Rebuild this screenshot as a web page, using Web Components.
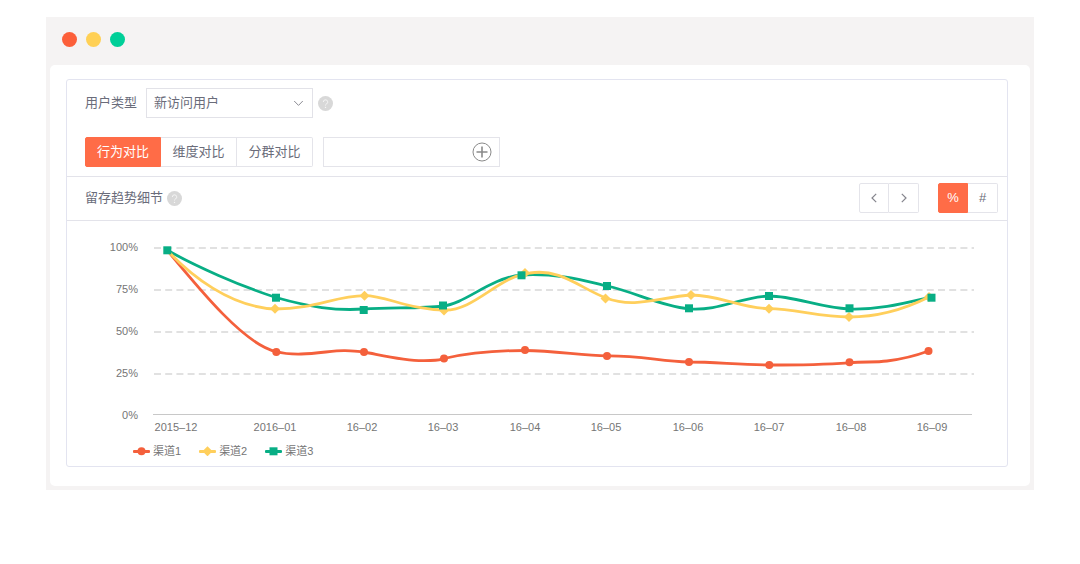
<!DOCTYPE html>
<html lang="zh-CN">
<head>
<meta charset="utf-8">
<title>留存趋势</title>
<style>
  body {
    margin: 0;
    padding: 17px 46px;
    background: #fff;
    color: #6a6c7a;
    font: 13px/20px "Liberation Sans", "Noto Sans CJK SC", sans-serif;
  }
</style>
</head>
<body>
<app-window>
  <retention-panel></retention-panel>
</app-window>

<script>
const define = (name, html, setup) =>
  customElements.define(name, class extends HTMLElement {
    connectedCallback() {
      if (this.shadowRoot) return;
      this.attachShadow({ mode: "open" }).innerHTML = html;
      if (setup) setup(this, this.shadowRoot);
    }
  });

/* Window frame with three coloured dots */
define("app-window", `
  <style>
    :host { display: block; background: #f5f3f3; padding: 0 4px 4px; }
    header { display: flex; gap: 9px; padding: 15px 12px 18px; }
    i { width: 15px; height: 15px; border-radius: 50%; }
    .close { background: #fc5f3a; }
    .min { background: #ffd055; }
    .max { background: #00cf98; }
    main { background: #fff; border-radius: 5px; padding: 14px 22px 19px 16px; }
  </style>
  <header><i class="close"></i><i class="min"></i><i class="max"></i></header>
  <main><slot></slot></main>
`);

/* Round question-mark hint */
define("help-tip", `
  <style>
    :host { display: block; width: 15px; height: 15px; }
    svg { display: block; }
  </style>
  <svg width="15" height="15" viewBox="0 0 15 15" fill="none">
    <circle cx="7.5" cy="7.5" r="7.5" fill="#d8d8d8"/>
    <path d="M5.3 6a2.2 2.2 0 1 1 3.3 1.9c-.8.5-1.1.8-1.1 1.6" stroke="#f6f6f6"/>
    <circle cx="7.5" cy="11.4" r=".7" fill="#f6f6f6"/>
  </svg>
`);

/* Labelled drop-down */
define("field-select", `
  <style>
    :host { display: flex; align-items: center; gap: 9px; }
    .box { display: grid; align-items: center; width: 167px; }
    select, svg { grid-area: 1 / 1; }
    select {
      appearance: none; box-sizing: border-box; width: 100%; height: 30px; margin: 0;
      padding: 0 7px; border: 1px solid #e2e2e8; border-radius: 0;
      background: #fff; color: inherit; font: inherit;
    }
    svg { justify-self: end; margin-right: 9px; pointer-events: none; }
  </style>
  <label for="field"><slot></slot></label>
  <div class="box">
    <select id="field"></select>
    <svg width="11" height="7" viewBox="0 0 11 7" fill="none" stroke="#8c8c94"><path d="M1.2 1 5.5 5.4 9.8 1"/></svg>
  </div>
`, (host, root) => {
  root.querySelector("select").add(new Option(host.getAttribute("value")));
});

/* Row of joined buttons; children are slotted <seg-button> elements */
define("button-group", `
  <style>:host { display: flex; }</style>
  <slot></slot>
`);

define("seg-button", `
  <style>
    :host { display: block; width: 30px; }
    :host([wide]) { width: 76px; }
    button {
      display: flex; align-items: center; justify-content: center;
      box-sizing: border-box; width: 100%; height: 30px; padding: 0;
      border: 1px solid #e4e4ea; border-left-width: 0; background: #fff;
      color: inherit; font: inherit;
    }
    :host(:first-child) button { border-left-width: 1px; border-radius: 2px 0 0 2px; }
    :host(:last-child) button { border-radius: 0 2px 2px 0; }
    :host([active]) button { background: #ff6c47; border-color: #ff6c47; color: #fff; }
  </style>
  <button type="button"><slot></slot></button>
`, (host, root) => {
  const button = root.querySelector("button");
  button.setAttribute("aria-pressed", host.hasAttribute("active"));
  if (host.title) button.setAttribute("aria-label", host.title);
});

/* Text box with a round add button at its end */
define("add-field", `
  <style>
    :host {
      display: flex; align-items: center; box-sizing: border-box;
      width: 177px; height: 30px; padding-right: 7px; border: 1px solid #e4e4ea;
    }
    input { flex: 1; min-width: 0; border: 0; padding: 0 8px; background: none; color: inherit; font: inherit; outline: none; }
    button { border: 0; padding: 0; background: none; }
    svg { display: block; }
  </style>
  <input type="text" aria-label="对比项">
  <button type="button" aria-label="添加">
    <svg width="20" height="20" viewBox="0 0 20 20" fill="none" stroke="#8a8a8a">
      <circle cx="10" cy="10" r="9"/>
      <path d="M10 4.5v11M4.5 10h11" stroke-width="1.6"/>
    </svg>
  </button>
`);

/* Line chart with its axes */
const COLORS = { circle: "#f4603c", diamond: "#ffcf5c", square: "#08ae85" };
const mark = (shape, x, y) => ({
  circle: `<circle cx="${x}" cy="${y}" r="4"/>`,
  diamond: `<path d="M${x} ${y - 5}l5 5-5 5-5-5z"/>`,
  square: `<path d="M${x - 4} ${y - 4}h8v8h-8z"/>`
})[shape];

const SERIES = [
  { shape: "circle",
    line: "M167 250C200 290 245 345 276 351.5C300 358 330 350 345 350.6S358 351 364 352C385 356 405 361 424 360.7S438 360 444 358.5C468 353 495 350.5 525 350.5C555 351 580 355 607 355.8C640 355.5 660 361 689 362C715 362 740 365 769 365C800 365 825 364.5 849 362.8C865 361.5 875 362.5 887 361S915 356 928.5 351",
    points: [[276.3, 352], [364, 352], [444, 358.5], [525, 350], [607, 356], [689, 362], [769.3, 365], [849.5, 362.3], [928.5, 351]] },
  { shape: "square",
    line: "M167 250C195 266 240 286 276 297.5C310 307 335 311 364 309C390 307 420 309 443 306C465 304 490 278 521 275C560 273 585 281 607 286C635 292 660 306 689 308.8C720 311 740 297 769 296C795 296 820 308 849 309C880 310 905 303 931 297",
    points: [[167.3, 250.3], [276, 297.7], [363.7, 310], [443, 305.5], [521.5, 275.3], [607, 286], [689, 308.3], [769, 296], [849.5, 308.3], [931.5, 297.7]] },
  { shape: "diamond",
    line: "M167 250C190 275 230 307 275 309C315 309 335 296 364.5 295.7C385 295.5 410 310 444 310C475 311 498 276 530 273C560 268 580 288 606 298C635 309 660 297 691 295C720 295 740 308 769 308.7C795 309 820 317 849 317C880 317 905 309 929 297",
    points: [[275, 308.7], [364.5, 295.7], [444, 310.5], [525, 273], [605.5, 298.5], [691, 295], [769, 308.7], [849, 317], [929, 297]] }
];
const LEVELS = [["100%", 248], ["75%", 290], ["50%", 332], ["25%", 374], ["0%", 416]];
const MONTHS = [["2015–12", 176], ["2016–01", 275], ["16–02", 362], ["16–03", 443], ["16–04", 525], ["16–05", 606], ["16–06", 688], ["16–07", 769], ["16–08", 851], ["16–09", 932]];

define("trend-chart", `
  <style>
    :host { display: block; }
    svg { display: block; width: 100%; height: auto; }
    text { fill: #757575; font-size: 11px; }
    .levels text { text-anchor: end; }
    .months text { text-anchor: middle; }
    .grid { stroke: #d8d8d8; stroke-width: 1.5; stroke-dasharray: 7 4.2; }
    .line { fill: none; stroke-width: 2.8; }
  </style>
  <svg viewBox="67 221 940 221" role="img" aria-label="留存趋势细节">
    <g class="grid">${LEVELS.slice(0, 4).map(l => `<path d="M154 ${l[1]}H974"/>`).join("")}</g>
    <path d="M153 414.5H972" stroke="#c8c8c8"/>
    <g class="levels">${LEVELS.map(l => `<text x="138" y="${l[1] + 3}">${l[0]}</text>`).join("")}</g>
    <g class="months">${MONTHS.map(m => `<text x="${m[1]}" y="431">${m[0]}</text>`).join("")}</g>
    ${[0, 1, 2].map(i => `<path class="line" stroke="${COLORS[SERIES[i].shape]}" d="${SERIES[i].line}"/>`).join("")}
    ${[0, 2, 1].map(i => `<g fill="${COLORS[SERIES[i].shape]}">${SERIES[i].points.map(p => mark(SERIES[i].shape, ...p)).join("")}</g>`).join("")}
  </svg>
`);

define("legend-item", `
  <style>
    :host { display: flex; align-items: center; gap: 3px; font-size: 11px; line-height: 16px; }
    svg { display: block; }
  </style>
  <svg width="17" height="10" viewBox="0 0 17 10"></svg>
  <span><slot></slot></span>
`, (host, root) => {
  const shape = host.getAttribute("shape");
  root.querySelector("svg").innerHTML =
    `<g fill="${COLORS[shape]}"><rect y="4" width="17" height="3" rx="1"/>${mark(shape, 8.5, 5.3)}</g>`;
});

/* Filters, heading bar and chart */
define("retention-panel", `
  <style>
    :host { display: block; border: 1px solid #e3e4f0; border-radius: 3px; }
    .filters { display: flex; flex-direction: column; gap: 19px; padding: 8px 18px 9px; border-bottom: 1px solid #e3e3ea; }
    .row { display: flex; align-items: center; }
    .user { gap: 5px; }
    .compare { gap: 10px; }
    .bar { display: flex; align-items: center; padding: 6px 9px 7px 18px; border-bottom: 1px solid #e3e3ea; }
    h2 { margin: 0 4px 0 0; font: inherit; }
    .tools { display: flex; gap: 19px; margin-left: auto; }
    .legend { display: flex; gap: 18px; padding: 1px 66px 7px; color: #757575; }
    svg { display: block; }
  </style>
  <div class="filters">
    <div class="row user">
      <field-select value="新访问用户">用户类型</field-select>
      <help-tip></help-tip>
    </div>
    <div class="row compare">
      <button-group>
        <seg-button wide active>行为对比</seg-button>
        <seg-button wide>维度对比</seg-button>
        <seg-button wide>分群对比</seg-button>
      </button-group>
      <add-field></add-field>
    </div>
  </div>
  <div class="bar">
    <h2>留存趋势细节</h2>
    <help-tip></help-tip>
    <div class="tools">
      <button-group>
        <seg-button title="上一页"><svg width="6" height="10" viewBox="0 0 6 10" fill="none" stroke="#85858d" stroke-width="1.2"><path d="M5.2.8 1 5l4.2 4.2"/></svg></seg-button>
        <seg-button title="下一页"><svg width="6" height="10" viewBox="0 0 6 10" fill="none" stroke="#85858d" stroke-width="1.2"><path d="M.8.8 5 5 .8 9.2"/></svg></seg-button>
      </button-group>
      <button-group>
        <seg-button active>%</seg-button>
        <seg-button>#</seg-button>
      </button-group>
    </div>
  </div>
  <trend-chart></trend-chart>
  <div class="legend">
    <legend-item shape="circle">渠道1</legend-item>
    <legend-item shape="diamond">渠道2</legend-item>
    <legend-item shape="square">渠道3</legend-item>
  </div>
`);
</script>
</body>
</html>
